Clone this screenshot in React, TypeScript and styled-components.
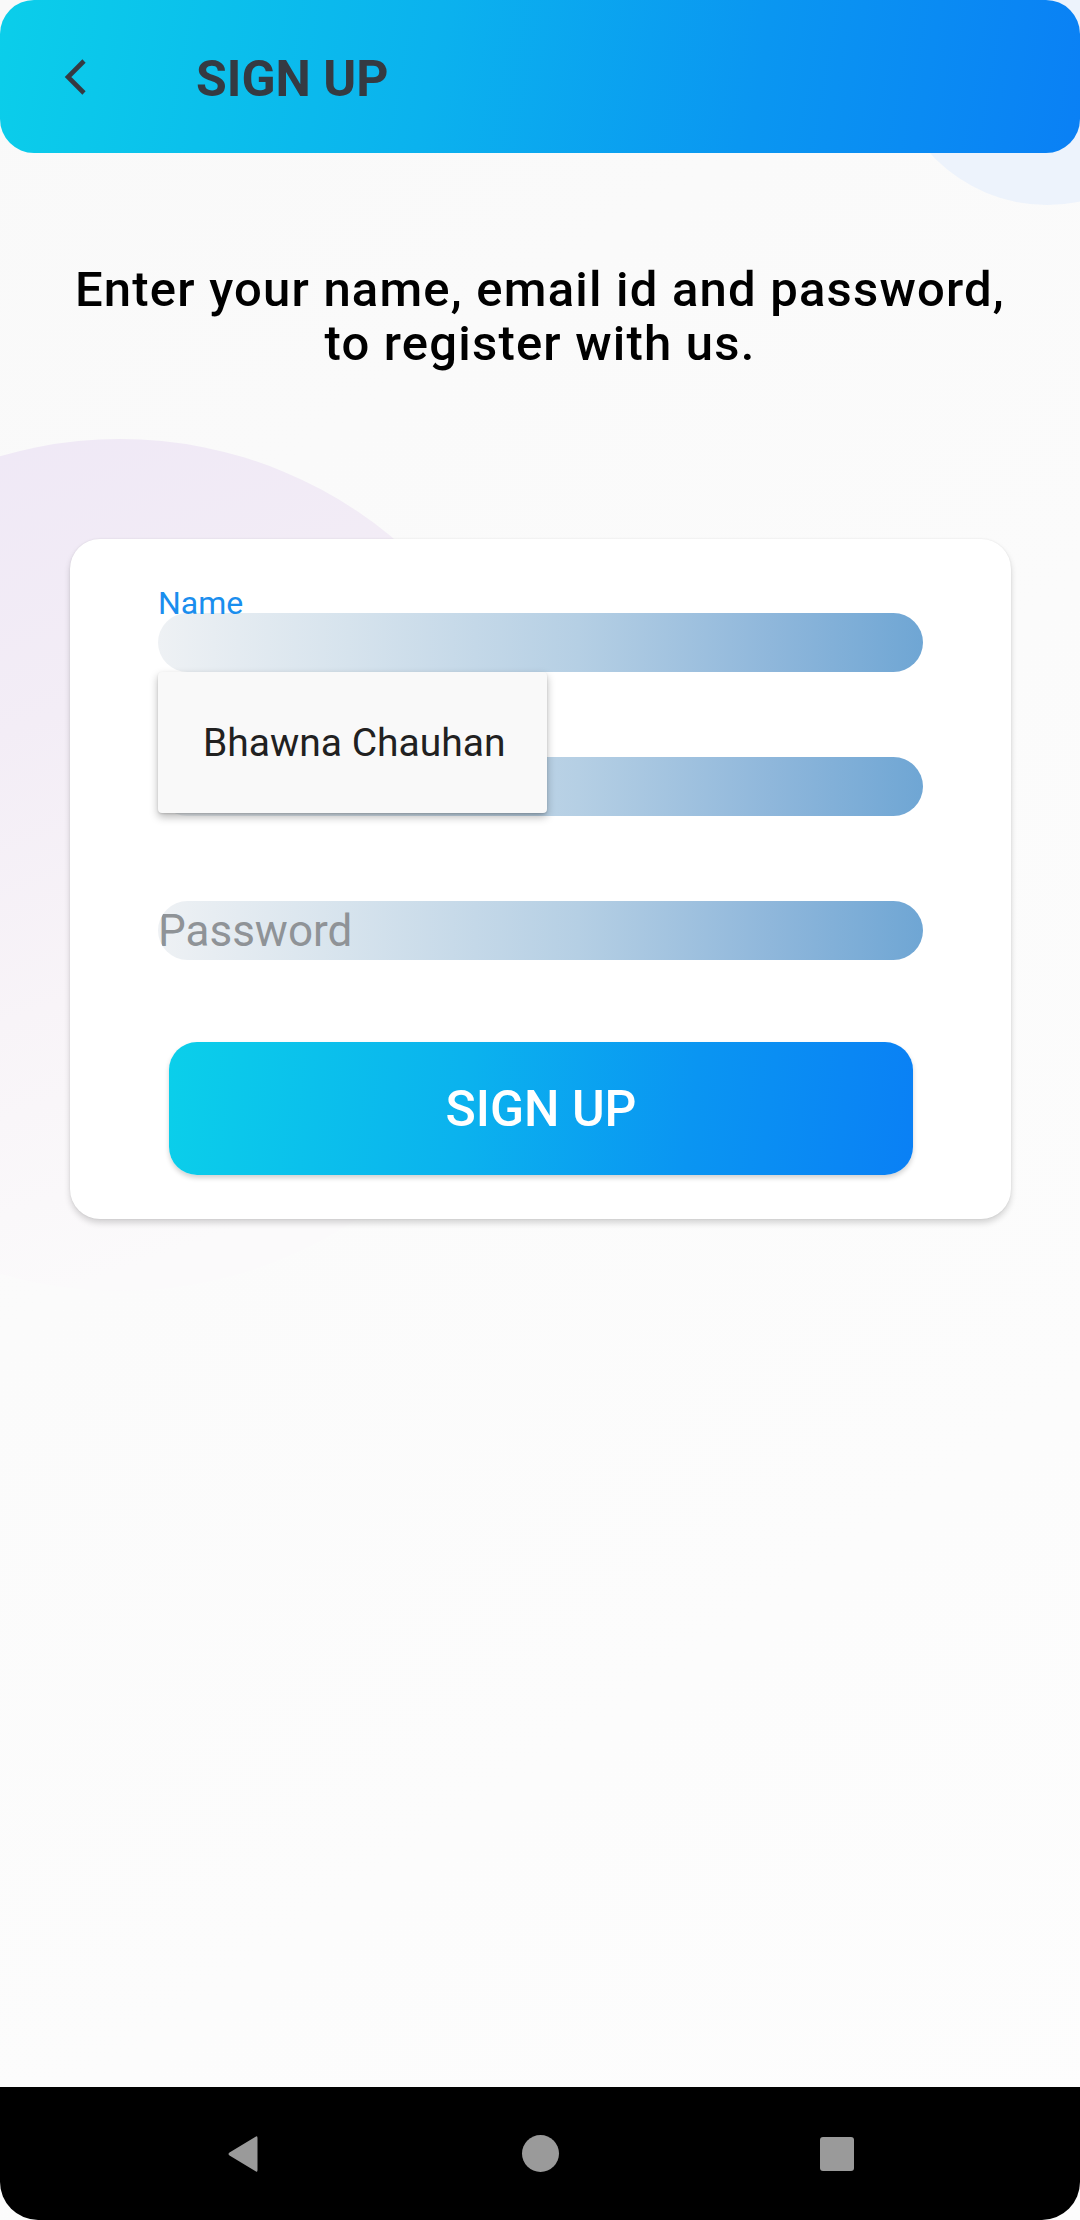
import React from "react";
import styled, { createGlobalStyle } from "styled-components";

const GlobalStyle = createGlobalStyle`
  html, body { margin: 0; padding: 0; }
  body { font-family: Roboto, "Noto Sans", sans-serif; background: #ffffff; }
  * { box-sizing: border-box; }
`;

const Screen = styled.div`
  position: relative;
  width: 1080px;
  height: 2220px;
  overflow: hidden;
  display: flex;
  flex-direction: column;
  background: linear-gradient(145deg, #f9f9f9 0%, #fbfbfb 45%, #fdfdfd 100%);
`;

const Blob = styled.div<{ $left: number; $top: number; $size: number; $bg: string }>`
  position: absolute;
  left: ${(p) => p.$left}px;
  top: ${(p) => p.$top}px;
  width: ${(p) => p.$size}px;
  height: ${(p) => p.$size}px;
  border-radius: 50%;
  background: ${(p) => p.$bg};
  z-index: 0;
`;

const Header = styled.header`
  position: relative;
  z-index: 1;
  height: 153px;
  flex-shrink: 0;
  display: flex;
  align-items: center;
  padding: 5px 0 0 0;
  border-radius: 34px;
  background: linear-gradient(100deg, #0bceea 0%, #0bb2ee 40%, #0a96f1 70%, #0a80f5 100%);
`;

const BackButton = styled.button`
  width: 60px;
  height: 60px;
  margin-left: 46px;
  margin-top: -5px;
  padding: 0;
  border: 0;
  background: transparent;
  display: flex;
  align-items: center;
  justify-content: center;
`;

const HeaderTitle = styled.h1`
  margin: 0 0 0 90px;
  font-family: Roboto, sans-serif;
  font-weight: 700;
  font-size: 50px;
  line-height: 1;
  color: #353a42;
  letter-spacing: 0px;
`;

const Content = styled.main`
  position: relative;
  z-index: 1;
  flex: 1;
  display: flex;
  flex-direction: column;
  align-items: center;
`;

const Intro = styled.p`
  margin: 110px 0 0 0;
  text-align: center;
  font-family: Roboto, sans-serif;
  font-weight: 500;
  font-size: 49px;
  letter-spacing: 1.2px;
  line-height: 54px;
  color: #000000;
`;

const Card = styled.section`
  margin-top: 168px;
  width: 941px;
  margin-left: 1px;
  background: #ffffff;
  border-radius: 30px;
  box-shadow: 0 0 2px rgba(0, 0, 0, 0.08), 0 4px 6px rgba(0, 0, 0, 0.16);
  padding: 48px 88px 44px 88px;
  display: flex;
  flex-direction: column;
`;

const Field = styled.div<{ $gap: number }>`
  position: relative;
  margin-top: ${(p) => p.$gap}px;
  display: flex;
  flex-direction: column;
`;

const FloatLabel = styled.label`
  font-family: Roboto, sans-serif;
  font-size: 32px;
  line-height: 32px;
  color: #1a8eee;
  margin-bottom: -6px;
  position: relative;
  z-index: 1;
`;

const Input = styled.input`
  width: 100%;
  height: 59px;
  border: 0;
  outline: none;
  padding: 0;
  border-radius: 30px;
  font-family: Roboto, sans-serif;
  font-size: 44px;
  color: #222;
  background: linear-gradient(90deg, #eef1f4 0%, #d6e3ed 25%, #b5cfe4 55%, #8fb7db 80%, #6fa6d4 100%);
  &::placeholder { color: #8f9397; }
`;

const Suggestion = styled.div`
  position: absolute;
  left: 0;
  top: 100%;
  width: 389px;
  height: 141px;
  z-index: 2;
  background: #f9f9f9;
  border-radius: 4px;
  box-shadow: 0 4px 8px rgba(0, 0, 0, 0.28), 0 1px 2px rgba(0, 0, 0, 0.12);
  display: flex;
  align-items: center;
  padding-left: 45px;
  font-family: Roboto, sans-serif;
  font-size: 39px;
  color: #212121;
`;

const SubmitButton = styled.button`
  margin: 82px 10px 0 11px;
  height: 133px;
  border: 0;
  border-radius: 28px;
  background: linear-gradient(97deg, #0bcfea 0%, #0bb2ee 40%, #0a95f2 70%, #0a80f5 100%);
  box-shadow: 0 3px 5px rgba(0, 0, 0, 0.18);
  color: #ffffff;
  font-family: Roboto, sans-serif;
  font-weight: 500;
  font-size: 50px;
  line-height: 1;
  padding-top: 2px;
`;

const NavBar = styled.nav`
  position: relative;
  z-index: 1;
  height: 133px;
  flex-shrink: 0;
  background: #000000;
  border-radius: 0 0 38px 38px;
  display: flex;
  align-items: center;
  justify-content: center;
  gap: 237px;
`;

const NavSlot = styled.div`
  width: 60px;
  height: 60px;
  display: flex;
  align-items: center;
  justify-content: center;
`;

const HomeDot = styled.div`
  width: 37px;
  height: 37px;
  border-radius: 50%;
  background: #9a9a9a;
`;

const RecentSquare = styled.div`
  width: 34px;
  height: 34px;
  border-radius: 3px;
  background: #9a9a9a;
`;

export default function App() {
  return (
    <>
      <GlobalStyle />
      <Screen>
        <Blob $left={889} $top={-111} $size={316} $bg="#edf3fc" />
        <Blob
          $left={-306}
          $top={439}
          $size={852}
          $bg="linear-gradient(160deg, #eee7f6 0%, #f3edf6 35%, #f8f4f8 60%, #fbfafb 85%)"
        />
        <Header>
          <BackButton aria-label="Back">
            <svg width="24" height="36" viewBox="0 0 24 36">
              <path d="M20 2 L4 18 L20 34" fill="none" stroke="#353a42" strokeWidth="4.6" strokeLinejoin="miter" />
            </svg>
          </BackButton>
          <HeaderTitle>SIGN UP</HeaderTitle>
        </Header>
        <Content>
          <Intro>
            Enter your name, email id and password,
            <br />
            to register with us.
          </Intro>
          <Card>
            <Field $gap={0}>
              <FloatLabel>Name</FloatLabel>
              <Input type="text" />
              <Suggestion>Bhawna Chauhan</Suggestion>
            </Field>
            <Field $gap={85}>
              <Input type="email" placeholder="Email" />
            </Field>
            <Field $gap={85}>
              <Input type="password" placeholder="Password" />
            </Field>
            <SubmitButton>SIGN UP</SubmitButton>
          </Card>
        </Content>
        <NavBar>
          <NavSlot>
            <svg width="34" height="40" viewBox="0 0 34 40">
              <path d="M30 2.5 Q31.5 1.5 31.5 4 L31.5 36 Q31.5 38.5 30 37.5 L3.5 21.5 Q1.5 20 3.5 18.5 Z" fill="#9a9a9a" />
            </svg>
          </NavSlot>
          <NavSlot>
            <HomeDot />
          </NavSlot>
          <NavSlot>
            <RecentSquare />
          </NavSlot>
        </NavBar>
      </Screen>
    </>
  );
}
